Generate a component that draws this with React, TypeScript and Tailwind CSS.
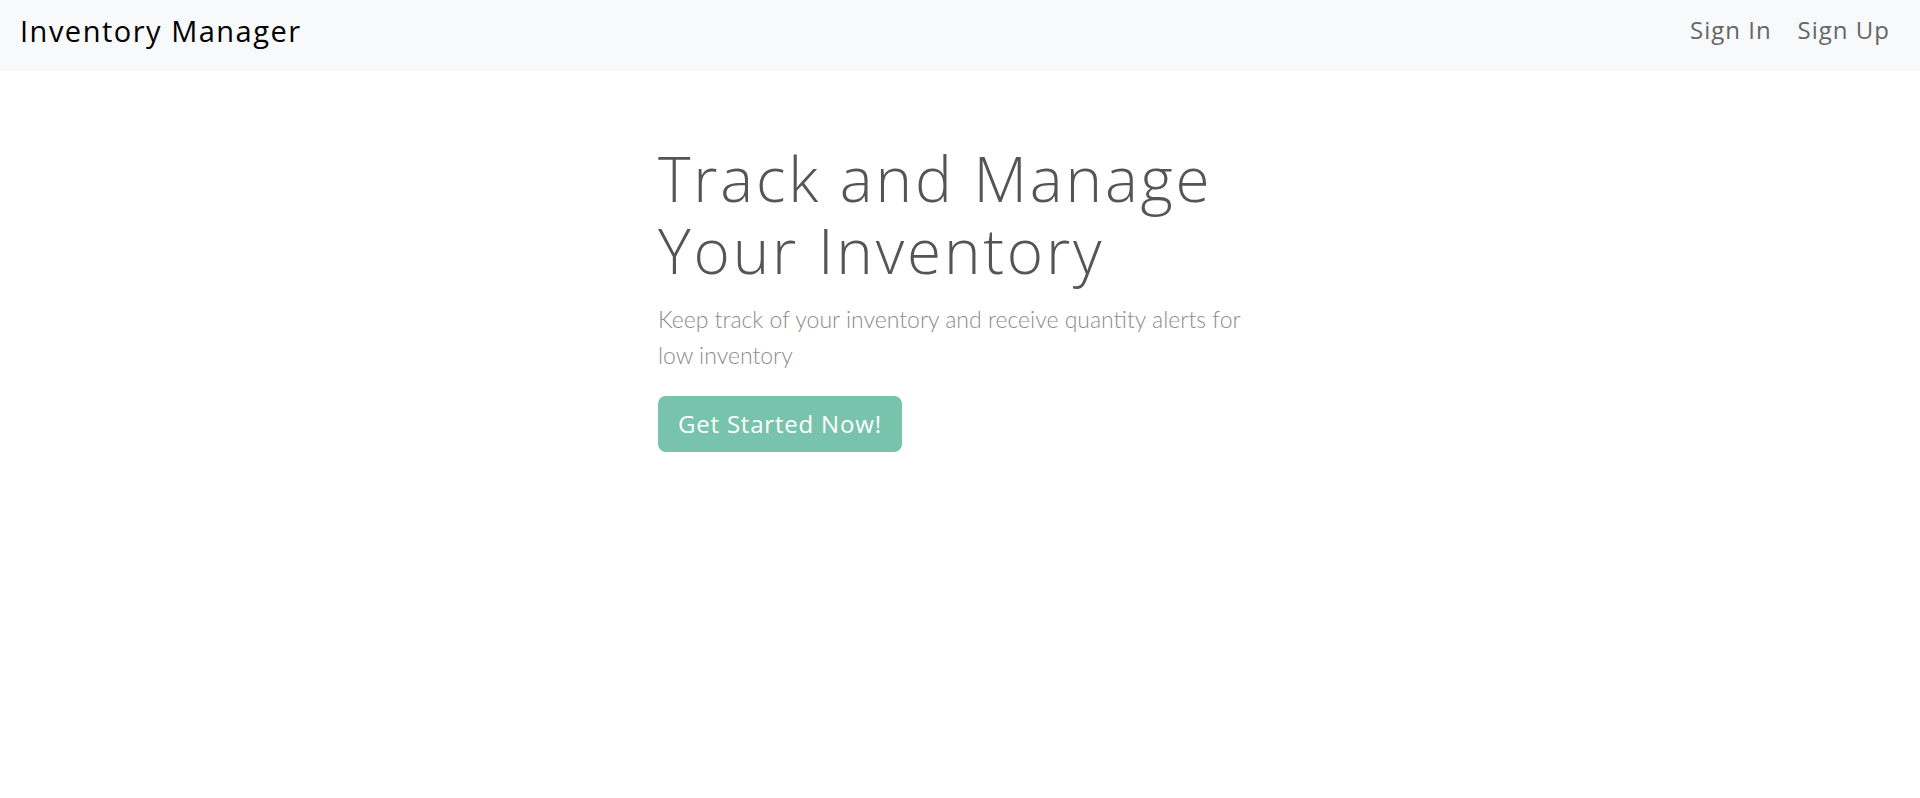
export default function App() {
  return (
    <div className="min-h-screen bg-white" style={{ fontFamily: "'Open Sans', sans-serif" }}>
      {/* Navbar */}
      <nav className="h-[71px] bg-[#f8f9fa] flex items-start justify-between pt-[9px] pl-[20px] pr-[30px]">
        <a className="text-[29px] leading-normal text-black tracking-[1.5px]" href="#">
          Inventory Manager
        </a>
        <div className="mt-[3px] flex items-center gap-[26px] text-[24px] leading-normal text-[#666666] tracking-[1px]">
          <a href="#">Sign In</a>
          <a href="#">Sign Up</a>
        </div>
      </nav>

      {/* Hero */}
      <div className="mx-auto w-[604px] pt-[71px]">
        <h1 className="text-[62px] leading-[72px] font-light tracking-[2.8px] text-[#555555]">
          Track and Manage Your Inventory
        </h1>
        <p
          className="mt-[15px] text-[23px] leading-[36px] font-light text-[#8c8c8c]"
          style={{ fontFamily: "Lato, sans-serif" }}
        >
          Keep track of your inventory and receive quantity alerts for low inventory
        </p>
        <button className="mt-[23px] h-[56px] px-[20px] rounded-[8px] bg-[#77c3ab] text-white text-[24px] tracking-[0.8px]">
          Get Started Now!
        </button>
      </div>
    </div>
  );
}
